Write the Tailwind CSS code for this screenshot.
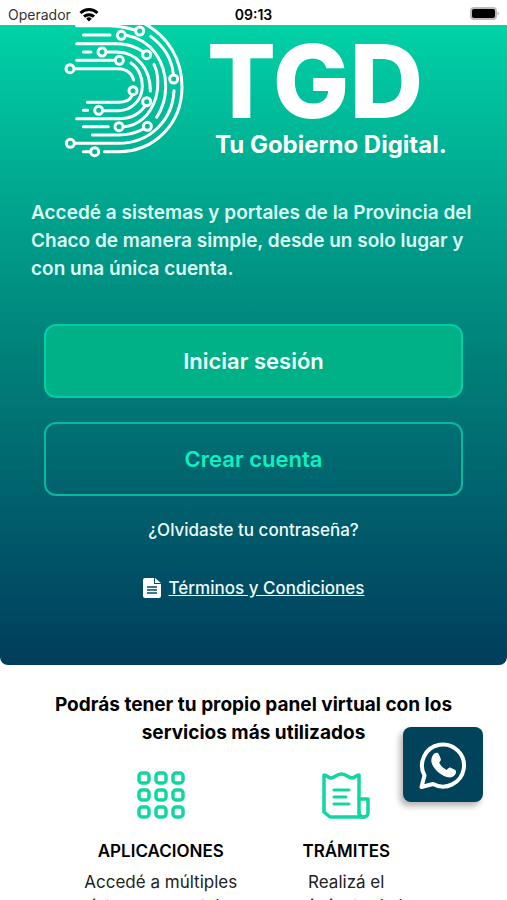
<!DOCTYPE html>
<html lang="es">
<head>
    <meta charset="UTF-8">
    <meta name="viewport" content="width=device-width, initial-scale=1.0">
    <title>TGD - Tu Gobierno Digital</title>
    <script src="https://cdn.jsdelivr.net/npm/@tailwindcss/browser@4"></script>
</head>
<body class="bg-white text-black font-['Inter',sans-serif]">
    <div class="h-screen overflow-hidden flex flex-col">
        <!-- Status bar -->
        <header class="grid grid-cols-3 items-center h-[25px] shrink-0 px-2 pt-1 text-sm leading-5">
            <div class="flex items-center gap-2">
                <span class="text-[#333]">Operador</span>
                <svg class="w-5 h-4" viewBox="0 0 20 16" fill="none" stroke="#000" stroke-width="3">
                    <path d="M1.500 6a12.300 12.300 0 0 1 17 0" />
                    <path d="M5 9.700a7.300 7.300 0 0 1 10 0" />
                    <path d="M10 14.500 7.200 11.700a4 4 0 0 1 5.600 0z" fill="#000" stroke="none" />
                </svg>
            </div>
            <div class="text-center font-semibold">09:13</div>
            <svg class="w-8 h-4 justify-self-end" viewBox="0 0 32 16">
                <rect x="3" y="0" width="27" height="13" rx="4" fill="#bbb" />
                <rect x="5" y="2" width="23" height="9" rx="2" fill="#000" />
                <path d="M30.500 4.500c2 .5 2 3.500 0 4z" fill="#bbb" />
            </svg>
        </header>

        <!-- Hero -->
        <section class="shrink-0 rounded-b-lg bg-linear-to-b from-[#00d2a6] via-[#00837b] via-50% to-[#003d5c] px-[31px] pb-[65px] text-white">
            <div class="flex pl-6">
                <svg class="w-[140px] h-[135px] shrink-0" viewBox="0 15 420 405" fill="none" stroke="#fff" stroke-width="9" stroke-linecap="round">
                    <path d="M65 17H165Q205 19 240 30" />
                    <path d="M85 45H165M85 96H108M85 271H98M85 320H160M85 395H105" />
                    <path d="M148 395H190C300 395 381 310 381 200C381 120 340 50 270 12" />
                    <path d="M61 370H190C285 370 353 300 357 212M287 49C325 77 350 115 355 162" />
                    <path d="M214 46C290 60 332 125 332 200Q332 250 305 292M112 345H190Q232 345 265 327" />
                    <path d="M65 71H185Q230 71 264 95M297 133C312 165 311 205 302 235C285 290 245 318 207 320" />
                    <path d="M155 96H185C245 96 286 145 286 213M65 296H190Q243 296 269 259" />
                    <path d="M65 121H178M228 129C253 145 262 175 262 197C262 240 230 272 190 272H146" />
                    <path d="M60 146H190C215 146 232 162 236 180M97 247H190Q222 247 231 227" />
                    <g>
                        <circle cx="254" cy="33" r="12" />
                        <circle cx="199" cy="46" r="12" />
                        <circle cx="141" cy="96" r="12" />
                        <circle cx="275" cy="104" r="12" />
                        <circle cx="193" cy="121" r="12" />
                        <circle cx="45" cy="146" r="12" />
                        <circle cx="356" cy="177" r="12" />
                        <circle cx="234" cy="212" r="12" />
                        <circle cx="275" cy="245" r="12" />
                        <circle cx="131" cy="271" r="12" />
                        <circle cx="192" cy="320" r="12" />
                        <circle cx="277" cy="319" r="12" />
                        <circle cx="46" cy="370" r="12" />
                        <circle cx="119" cy="395" r="12" />
                    </g>
                </svg>
                <div class="pl-3 pt-1">
                    <h1 class="text-[102px] leading-[104px] font-extrabold">TGD</h1>
                    <p class="text-2xl leading-6 pl-2 font-bold whitespace-nowrap">Tu Gobierno Digital.</p>
                </div>
            </div>

            <p class="mt-[39px] text-[19px] leading-7 font-semibold text-[#dcfcf4]">Accedé a sistemas y portales de la Provincia del Chaco de manera simple, desde un solo lugar y con una única cuenta.</p>

            <div class="mt-[41px] px-[13px] flex flex-col gap-6">
                <button class="h-[74px] rounded-xl border-2 border-[#00cfa4] bg-[#00b087] text-[22px] font-semibold text-[#f0fffb]">Iniciar sesión</button>
                <button class="h-[74px] rounded-xl border-2 border-[#08b9a0] text-[22px] font-semibold text-[#0cf0c2]">Crear cuenta</button>
            </div>

            <div class="mt-[22px] flex flex-col items-center gap-[34px] text-[17px] leading-6 font-medium text-[#eefbfb]">
                <a href="#">¿Olvidaste tu contraseña?</a>
                <a href="#" class="flex items-center gap-2">
                    <svg class="w-[18px] h-5" viewBox="0 0 18 20">
                        <path d="M2 0H11V6H18V18a2 2 0 0 1-2 2H2a2 2 0 0 1-2-2V2a2 2 0 0 1 2-2zM12 0 18 5H12z" fill="#fff" />
                        <path d="M4 9H14M4 12H14M4 15H14" stroke="#004c66" stroke-width="1.300" />
                    </svg>
                    <span class="underline">Términos y Condiciones</span>
                </a>
            </div>
        </section>

        <!-- Features -->
        <section class="shrink-0 px-12 pt-[26px] text-center">
            <h2 class="text-[19px] leading-7 font-bold">Podrás tener tu propio panel virtual con los servicios más utilizados</h2>
            <div class="mt-6 px-5 grid grid-cols-2">
                <div class="flex flex-col items-center">
                    <svg class="w-[50px] h-[50px]" viewBox="0 0 50 50" fill="none" stroke="#12d6a2" stroke-width="3.500">
                        <rect x="3" y="2" width="10" height="10" rx="3" />
                        <rect x="20" y="2" width="10" height="10" rx="3" />
                        <rect x="37" y="2" width="10" height="10" rx="3" />
                        <rect x="3" y="19" width="10" height="10" rx="3" />
                        <rect x="20" y="19" width="10" height="10" rx="3" />
                        <rect x="37" y="19" width="10" height="10" rx="3" />
                        <rect x="3" y="36" width="10" height="10" rx="3" />
                        <rect x="20" y="36" width="10" height="10" rx="3" />
                        <rect x="37" y="36" width="10" height="10" rx="3" />
                    </svg>
                    <h3 class="mt-[18px] text-[17px] leading-6 font-semibold">APLICACIONES</h3>
                    <p class="mt-[7px] text-[17px] leading-6 text-[#222]">Accedé a múltiples<br>sistemas y portales</p>
                </div>
                <div class="flex flex-col items-center">
                    <svg class="w-[50px] h-[50px]" viewBox="0 0 50 50" fill="none" stroke="#12d6a2" stroke-width="3.500" stroke-linecap="round" stroke-linejoin="round">
                        <path d="M3 4C6 4 7 7 10 7C14 7 15 3 20.500 3C26 3 27 7 31 7C34 7 35 4 38 4V41Q38 46 43 46H9L3 41Z" />
                        <path d="M38 28H47V41Q47 46 42.500 46Q38 46 38 41" />
                        <path d="M13 19H28M13 26H25M13 33H28" stroke-width="3" />
                    </svg>
                    <h3 class="mt-[18px] text-[17px] leading-6 font-semibold">TRÁMITES</h3>
                    <p class="mt-[7px] text-[17px] leading-6 text-[#222]">Realizá el<br>seguimiento de los</p>
                </div>
            </div>
        </section>
    </div>

    <!-- WhatsApp floating button -->
    <button aria-label="WhatsApp" class="fixed right-6 bottom-[98px] w-20 h-[75px] rounded-lg bg-[#00435b] shadow-[-3px_4px_6px_rgba(0,0,0,0.3)] flex items-center justify-center">
        <svg class="w-12 h-12" viewBox="0 0 48 48">
            <path d="M2.500 46 5.500 34.500A21 21 0 1 1 14 43z" fill="none" stroke="#fff" stroke-width="4" stroke-linejoin="round" />
            <path d="M15.500 12.500c1.500-1 3.500-1 4.200.6l2 4.600c.5 1.200-.1 2.200-1.500 4 1.800 3.300 4 5.500 7.500 7.200 1.500-1.800 2.500-2.800 4-2.200l4.500 2.200c1.400.8 1 3 0 4.600-1.800 2.800-5.200 3.600-8.500 2.600-7.500-2.400-13-8.200-15-14-1-3.800.3-7.600 2.800-9.600z" fill="#fff" />
        </svg>
    </button>
</body>
</html>
